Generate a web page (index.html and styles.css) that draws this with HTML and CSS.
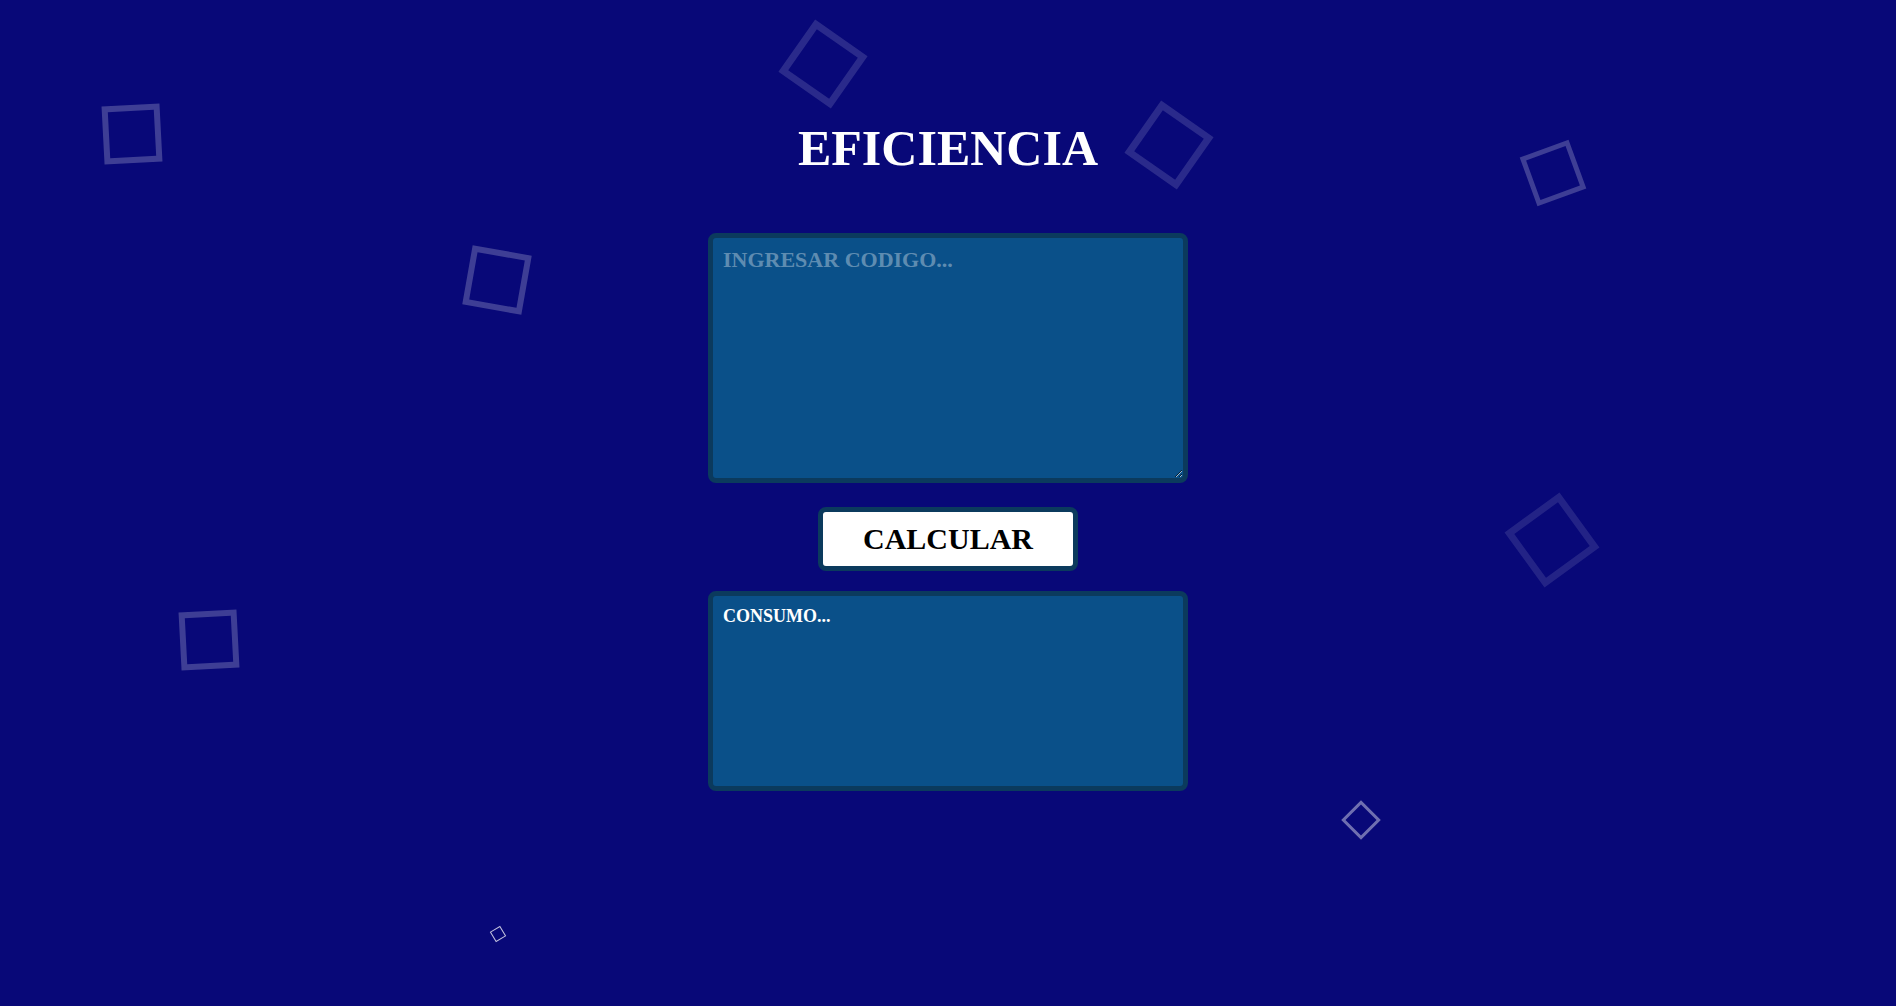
FILE: index.html
```html
<!DOCTYPE html>
<html lang="es">
<head>
<meta charset="utf-8">
<title>Eficiencia</title>
<link rel="stylesheet" href="styles.css">
</head>
<body>
<ul class="squares">
  <li class="sq sq1"></li>
  <li class="sq sq2"></li>
  <li class="sq sq3"></li>
  <li class="sq sq4"></li>
  <li class="sq sq5"></li>
  <li class="sq sq6"></li>
  <li class="sq sq7"></li>
  <li class="sq sq8"></li>
  <li class="sq sq9"></li>
</ul>
<main class="app">
  <h1 class="title">EFICIENCIA</h1>
  <textarea class="code-input" placeholder="INGRESAR CODIGO..."></textarea>
  <button class="calc-btn" type="button">CALCULAR</button>
  <div class="result">CONSUMO...</div>
</main>
</body>
</html>
```

FILE: styles.css
```css
* { box-sizing: border-box; }

html, body {
  margin: 0;
  padding: 0;
  height: 100%;
}

body {
  background: #080878;
  font-family: "Liberation Serif", "Times New Roman", serif;
  overflow: hidden;
  position: relative;
}

.squares {
  list-style: none;
  margin: 0;
  padding: 0;
  position: absolute;
  inset: 0;
  pointer-events: none;
}

.sq {
  position: absolute;
  border-style: solid;
  border-color: rgba(255, 255, 255, 0.22);
}

.sq1 { left: 103px; top: 105px; width: 58px; height: 58px; border-width: 6px; transform: rotate(-3deg); }
.sq2 { left: 791px; top: 32px; width: 64px; height: 64px; border-width: 7px; transform: rotate(35deg); border-color: rgba(255,255,255,0.14); }
.sq3 { left: 1137px; top: 113px; width: 64px; height: 64px; border-width: 7px; transform: rotate(35deg); border-color: rgba(255,255,255,0.14); }
.sq4 { left: 467px; top: 250px; width: 60px; height: 60px; border-width: 6px; transform: rotate(10deg); }
.sq5 { left: 1527px; top: 147px; width: 52px; height: 52px; border-width: 5px; transform: rotate(-20deg); }
.sq6 { left: 1518px; top: 506px; width: 68px; height: 68px; border-width: 7px; transform: rotate(-36deg); border-color: rgba(255,255,255,0.11); }
.sq7 { left: 180px; top: 611px; width: 58px; height: 58px; border-width: 6px; transform: rotate(-3deg); }
.sq8 { left: 1347px; top: 806px; width: 28px; height: 28px; border-width: 3px; transform: rotate(45deg); border-color: rgba(255,255,255,0.42); }
.sq9 { left: 492px; top: 928px; width: 12px; height: 12px; border-width: 1px; transform: rotate(-31deg); border-color: rgba(255,255,255,0.75); }

.app {
  position: relative;
  display: flex;
  flex-direction: column;
  align-items: center;
  padding-top: 120px;
}

.title {
  margin: 0 0 55px;
  font-size: 50px;
  line-height: 1.15;
  font-weight: bold;
  color: #ffffff;
}

.code-input,
.result {
  width: 480px;
  border: 5px solid #0b3a5d;
  border-radius: 8px;
  background: #0a5089;
  color: #ffffff;
  font-family: "Liberation Serif", "Times New Roman", serif;
  font-weight: bold;
}

.code-input {
  display: block;
  height: 250px;
  padding: 9px 10px;
  font-size: 22px;
  line-height: 1.15;
  outline: none;
  margin: 0 0 24px;
}

.code-input::placeholder {
  color: rgba(255, 255, 255, 0.36);
  font-weight: bold;
  opacity: 1;
}

.calc-btn {
  width: 260px;
  height: 64px;
  border: 5px solid #0b3a5d;
  border-radius: 8px;
  background: #ffffff;
  color: #000000;
  font-family: "Liberation Serif", "Times New Roman", serif;
  font-size: 30px;
  font-weight: bold;
  padding: 0;
  margin: 0 0 20px;
  cursor: pointer;
}

.result {
  height: 200px;
  padding: 10px;
  font-size: 18px;
  line-height: 1.15;
}
```
